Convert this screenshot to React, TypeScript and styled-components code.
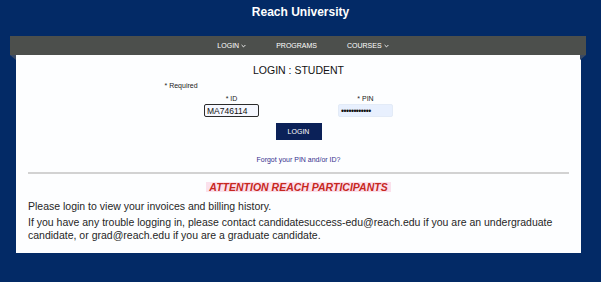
import React from "react";
import styled, { createGlobalStyle } from "styled-components";

const Global = createGlobalStyle`
  html, body { margin: 0; padding: 0; background: #032a66; }
  body { font-family: "Liberation Sans", Arial, sans-serif; }
  * { box-sizing: border-box; }
`;

const Page = styled.div`
  width: 601px;
  height: 282px;
  background: #032a66;
  overflow: hidden;
`;

const Header = styled.header`
  height: 36px;
  display: flex;
  justify-content: center;
  padding: 5px 0 0 0;
  font-size: 12px;
  font-weight: bold;
  color: #ffffff;
  line-height: 14px;
`;

const Nav = styled.nav`
  position: relative;
  margin: 0 15px 0 10px;
  height: 19px;
  background: #4c4f4c;
  display: flex;
  justify-content: center;
  align-items: center;
  gap: 30px;
  padding-left: 10px;
  &::before, &::after {
    content: "";
    position: absolute;
    top: 19px;
    width: 0;
    height: 0;
    border-top: 5px solid #3b4a63;
  }
  &::before { left: 0; border-left: 6px solid transparent; }
  &::after { right: 0; border-right: 6px solid transparent; }
`;

const NavItem = styled.span`
  color: #ffffff;
  font-size: 7px;
  display: flex;
  align-items: center;
  gap: 2px;
`;

const Panel = styled.main`
  margin: 0 20px 0 16px;
  height: 198px;
  background: #fdfeff;
  padding: 9px 12px 0 12px;
  display: flex;
  flex-direction: column;
  align-items: center;
`;

const Title = styled.h1`
  margin: 0;
  font-size: 10.5px;
  font-weight: normal;
  line-height: 13px;
  color: #111;
`;

const Form = styled.form`
  width: 268px;
  margin-top: 4px;
  display: grid;
  grid-template-columns: 134px 134px;
  justify-items: center;
`;

const Required = styled.div`
  grid-column: 1 / span 2;
  justify-self: start;
  font-size: 7px;
  line-height: 9px;
  color: #222;
`;

const Field = styled.div`
  margin-top: 4px;
  display: flex;
  flex-direction: column;
  align-items: center;
`;

const Label = styled.label`
  font-size: 7px;
  line-height: 9px;
  color: #222;
  margin-bottom: 1px;
`;

const Input = styled.input<{ $focused?: boolean }>`
  width: 55px;
  height: 13px;
  margin: 0;
  padding: 0 2px;
  font-family: "Liberation Sans", Arial, sans-serif;
  font-size: 8.5px;
  color: #111;
  outline: none;
  border-radius: 2px;
  border: ${(p) => (p.$focused ? "1.5px solid #2b2b2b" : "1px solid #e3ebf7")};
  background: ${(p) => (p.$focused ? "#f6f8ff" : "#e8f0fe")};
  letter-spacing: ${(p) => (p.$focused ? "0" : "-0.5px")};
`;

const Button = styled.button`
  grid-column: 1 / span 2;
  margin-top: 6px;
  width: 46px;
  height: 17px;
  border: none;
  background: #0b2158;
  color: #ffffff;
  font-family: "Liberation Sans", Arial, sans-serif;
  font-size: 7px;
  padding: 0;
`;

const Forgot = styled.a`
  margin-top: 15px;
  font-size: 7px;
  line-height: 9px;
  color: #35318e;
  text-decoration: none;
`;

const Rule = styled.hr`
  align-self: stretch;
  margin: 8px 0 0 0;
  border: none;
  height: 2px;
  background: #d2d2d2;
`;

const Attention = styled.h2`
  margin: 8px 0 0 0;
  font-size: 10.5px;
  line-height: 10px;
  font-weight: bold;
  font-style: italic;
  color: #c7281f;
  background: #fbe1ec;
  padding: 0 3px;
`;

const Body = styled.div`
  align-self: stretch;
  margin-top: 8px;
  display: flex;
  flex-direction: column;
  gap: 3px;
`;

const Para = styled.p`
  margin: 0;
  font-size: 10.5px;
  line-height: 13px;
  color: #262626;
`;

const Chevron = () => (
  <svg width="5" height="4" viewBox="0 0 5 4">
    <path d="M0.6 1 L2.5 2.9 L4.4 1" fill="none" stroke="#ffffff" strokeWidth="0.9" />
  </svg>
);

export default function App() {
  return (
    <Page>
      <Global />
      <Header>Reach University</Header>
      <Nav>
        <NavItem>LOGIN <Chevron /></NavItem>
        <NavItem>PROGRAMS</NavItem>
        <NavItem>COURSES <Chevron /></NavItem>
      </Nav>
      <Panel>
        <Title>LOGIN : STUDENT</Title>
        <Form onSubmit={(e) => e.preventDefault()}>
          <Required>* Required</Required>
          <Field>
            <Label>* ID</Label>
            <Input $focused readOnly value="MA746114" />
          </Field>
          <Field>
            <Label>* PIN</Label>
            <Input type="password" readOnly value="............" />
          </Field>
          <Button type="submit">LOGIN</Button>
        </Form>
        <Forgot href="#">Forgot your PIN and/or ID?</Forgot>
        <Rule />
        <Attention>ATTENTION REACH PARTICIPANTS</Attention>
        <Body>
          <Para>Please login to view your invoices and billing history.</Para>
          <Para>
            If you have any trouble logging in, please contact candidatesuccess-edu@reach.edu if you are an undergraduate
            candidate, or grad@reach.edu if you are a graduate candidate.
          </Para>
        </Body>
      </Panel>
    </Page>
  );
}
